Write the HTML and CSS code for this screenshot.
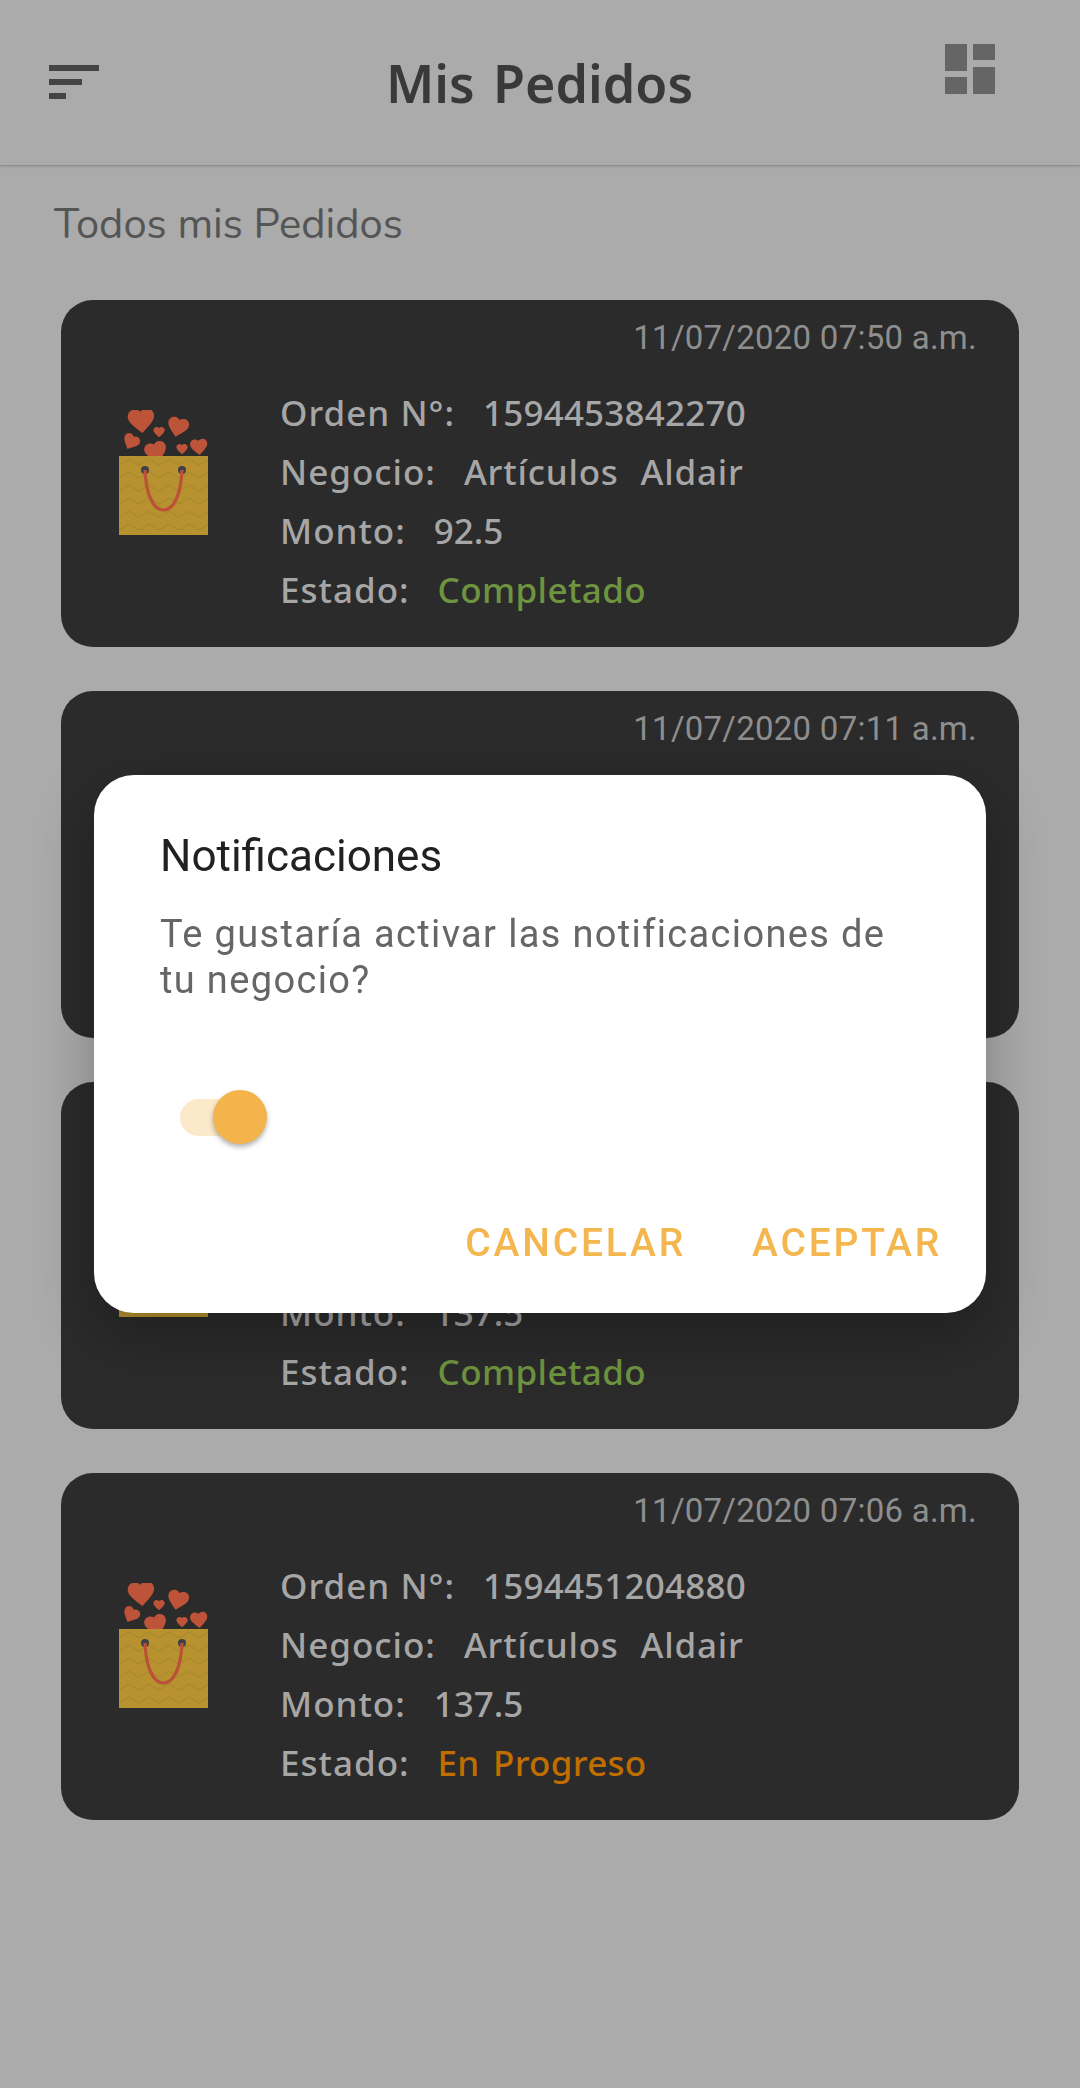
FILE: index.html
```html
<!DOCTYPE html>
<html lang="es">
<head>
<meta charset="utf-8">
<title>Mis Pedidos</title>
<link rel="stylesheet" href="styles.css">
</head>
<body>
<svg class="defs" width="0" height="0" aria-hidden="true">
  <defs>
    <path id="h" d="M12 21.35l-1.45-1.32C5.4 15.36 2 12.28 2 8.5 2 5.42 4.42 3 7.5 3c1.74 0 3.41.81 4.5 2.09C13.09 3.81 14.76 3 16.5 3 19.58 3 22 5.42 22 8.5c0 3.78-3.4 6.86-8.55 11.54L12 21.35z"/>
    <pattern id="zig" width="20" height="13" patternUnits="userSpaceOnUse" x="4" y="46">
      <path d="M0 9 L10 3 L20 9" fill="none" stroke="#aa8a2f" stroke-width="1.500"/>
    </pattern>
    <symbol id="bag" viewBox="0 0 100 130">
      <g fill="#bd5339">
        <use href="#h" transform="translate(10.200 -4.800) rotate(-5 13 13) scale(1.320)"/>
        <use href="#h" transform="translate(50.400 4.400) rotate(14 12 12) scale(1.050)"/>
        <use href="#h" transform="translate(37.200 15.200) scale(.570)"/>
        <use href="#h" transform="translate(6 22) rotate(28 10 10) scale(.830)"/>
        <use href="#h" transform="translate(27.800 28.800) rotate(-15 13 13) scale(1.100)"/>
        <use href="#h" transform="translate(60.200 32.200) scale(.570)"/>
        <use href="#h" transform="translate(73.600 26.600) rotate(-5 10 10) scale(.860)"/>
      </g>
      <rect x="4" y="46" width="89" height="79" fill="#b8922f"/>
      <rect x="4" y="46" width="89" height="79" fill="url(#zig)"/>
      <circle cx="30" cy="60" r="4" fill="#3d4048"/>
      <circle cx="67" cy="60" r="4" fill="#3d4048"/>
      <path d="M30 60 C31 84 38 100 48.500 100 C59 100 66 84 67 60" fill="none" stroke="#bb5138" stroke-width="3.200"/>
    </symbol>
  </defs>
</svg>

<header class="topbar">
  <svg class="icon-menu" width="50" height="34" viewBox="0 0 50 34" aria-label="Menú"><rect width="50" height="6"/><rect y="14" width="33" height="6"/><rect y="28" width="17" height="6"/></svg>
  <h1 class="title">Mis Pedidos</h1>
  <svg class="icon-grid" width="50" height="50" viewBox="0 0 50 50" aria-label="Vista"><rect width="22" height="27"/><rect y="33" width="22" height="17"/><rect x="28" width="22" height="16"/><rect x="28" y="23" width="22" height="27"/></svg>
</header>

<main class="content">
  <h2 class="subtitle">Todos mis Pedidos</h2>

  <article class="card">
    <div class="date">11/07/2020 07:50 a.m.</div>
    <div class="card-body">
      <svg class="bag" width="100" height="130"><use href="#bag"/></svg>
      <div class="rows">
        <div class="row"><span class="label">Orden N°:</span><span class="num">1594453842270</span></div>
        <div class="row"><span class="label">Negocio:</span><span class="wide">Artículos Aldair</span></div>
        <div class="row"><span class="label">Monto:</span><span>92.5</span></div>
        <div class="row"><span class="label">Estado:</span><span class="done">Completado</span></div>
      </div>
    </div>
  </article>

  <article class="card">
    <div class="date">11/07/2020 07:11 a.m.</div>
    <div class="card-body">
      <svg class="bag" width="100" height="130"><use href="#bag"/></svg>
    </div>
  </article>

  <article class="card">
    <div class="date"></div>
    <div class="card-body">
      <svg class="bag" width="100" height="130"><use href="#bag"/></svg>
      <div class="rows">
        <div class="row"></div>
        <div class="row"></div>
        <div class="row"><span class="label">Monto:</span><span>137.5</span></div>
        <div class="row"><span class="label">Estado:</span><span class="done">Completado</span></div>
      </div>
    </div>
  </article>

  <article class="card">
    <div class="date">11/07/2020 07:06 a.m.</div>
    <div class="card-body">
      <svg class="bag" width="100" height="130"><use href="#bag"/></svg>
      <div class="rows">
        <div class="row"><span class="label">Orden N°:</span><span class="num">1594451204880</span></div>
        <div class="row"><span class="label">Negocio:</span><span class="wide">Artículos Aldair</span></div>
        <div class="row"><span class="label">Monto:</span><span>137.5</span></div>
        <div class="row"><span class="label">Estado:</span><span class="progress">En Progreso</span></div>
      </div>
    </div>
  </article>
</main>

<div class="overlay">
  <section class="dialog">
    <h3 class="dialog-title">Notificaciones</h3>
    <p class="dialog-text">Te gustaría activar las notificaciones de tu negocio?</p>
    <div class="switch"><span class="track"></span><span class="knob"></span></div>
    <div class="actions"><span class="action">CANCELAR</span><span class="action">ACEPTAR</span></div>
  </section>
</div>
</body>
</html>
```
FILE: styles.css
```css
* { box-sizing: border-box; }
html, body { margin: 0; padding: 0; }
body {
  width: 1080px;
  height: 2088px;
  overflow: hidden;
  background: #ababab;
  font-family: "Noto Sans", sans-serif;
}
.defs { display: block; height: 0; }

.topbar {
  height: 166px;
  display: flex;
  justify-content: space-between;
  padding: 44px 85px 0 49px;
  border-bottom: 1px solid #8f8f8f;
  box-shadow: 0 1px 2px rgba(0,0,0,.12);
  position: relative;
}
.icon-menu { fill: #444; margin-top: 21px; }
.icon-grid { fill: #656565; }
.title {
  margin: 9px 0 0 35px;
  height: 60px;
  font-size: 52px;
  line-height: 60px;
  font-weight: 600;
  color: #393939;
  word-spacing: 5px;
}

.content { padding: 0 61px; display: flex; flex-direction: column; }
.subtitle {
  margin: 36px 0 52px -7px;
  font-size: 41.700px;
  line-height: 46px;
  font-weight: 400;
  color: #555;
  height: 46px;
  font-family: "Nunito", "Noto Sans", sans-serif;
}

.card {
  height: 347px;
  margin-bottom: 44px;
  background: #2b2b2b;
  border-radius: 32px;
  padding: 19px 42px 0 0;
  display: flex;
  flex-direction: column;
}
.date {
  align-self: flex-end;
  height: 38px;
  font-family: Roboto, sans-serif;
  font-size: 33px;
  line-height: 38px;
  letter-spacing: .25px;
  color: #8e8e8e;
}
.card-body { display: flex; padding-left: 54px; margin-top: 6px; }
.bag { margin-top: 47px; flex: none; }
.rows { margin-left: 65px; margin-top: 20px; display: flex; flex-direction: column; }
.row {
  display: flex;
  gap: 28px;
  height: 59px;
  align-items: center;
  font-size: 35px;
  font-weight: 500;
  color: #a6a6a6;
  word-spacing: 4px;
}
.label { letter-spacing: 1px; word-spacing: 0; }
.num { letter-spacing: .2px; }
.wide { letter-spacing: .8px; word-spacing: 12px; }
.done { color: #6f9440; letter-spacing: .4px; }
.progress { color: #c06e00; letter-spacing: .3px; }

.overlay {
  position: fixed;
  inset: 0;
  display: flex;
  align-items: center;
  justify-content: center;
}
.dialog {
  width: 892px;
  height: 538px;
  background: #fff;
  border-radius: 40px;
  box-shadow: 0 22px 60px rgba(0,0,0,.28);
  padding: 56px 44px 0 66px;
  font-family: Roboto, sans-serif;
  display: flex;
  flex-direction: column;
}
.dialog-title {
  margin: 0;
  font-size: 44px;
  line-height: 50px;
  font-weight: 400;
  color: #212121;
}
.dialog-text {
  margin: 31px 0 0;
  font-size: 38px;
  line-height: 45.500px;
  letter-spacing: 1.350px;
  color: #666;
  width: 750px;
}
.switch { display: flex; align-items: center; height: 54px; margin: 87px 0 0 20px; }
.track { width: 67px; height: 37px; border-radius: 19px; background: #fbe9c9; }
.knob {
  width: 54px;
  height: 54px;
  border-radius: 50%;
  background: #f3b44b;
  margin-left: -34px;
  box-shadow: 0 3px 5px rgba(0,0,0,.3);
}
.actions { display: flex; justify-content: flex-end; gap: 66px; margin-top: 77px; }
.action {
  font-size: 39px;
  line-height: 44px;
  font-weight: 500;
  letter-spacing: 2.800px;
  color: #f4b64e;
}
```
